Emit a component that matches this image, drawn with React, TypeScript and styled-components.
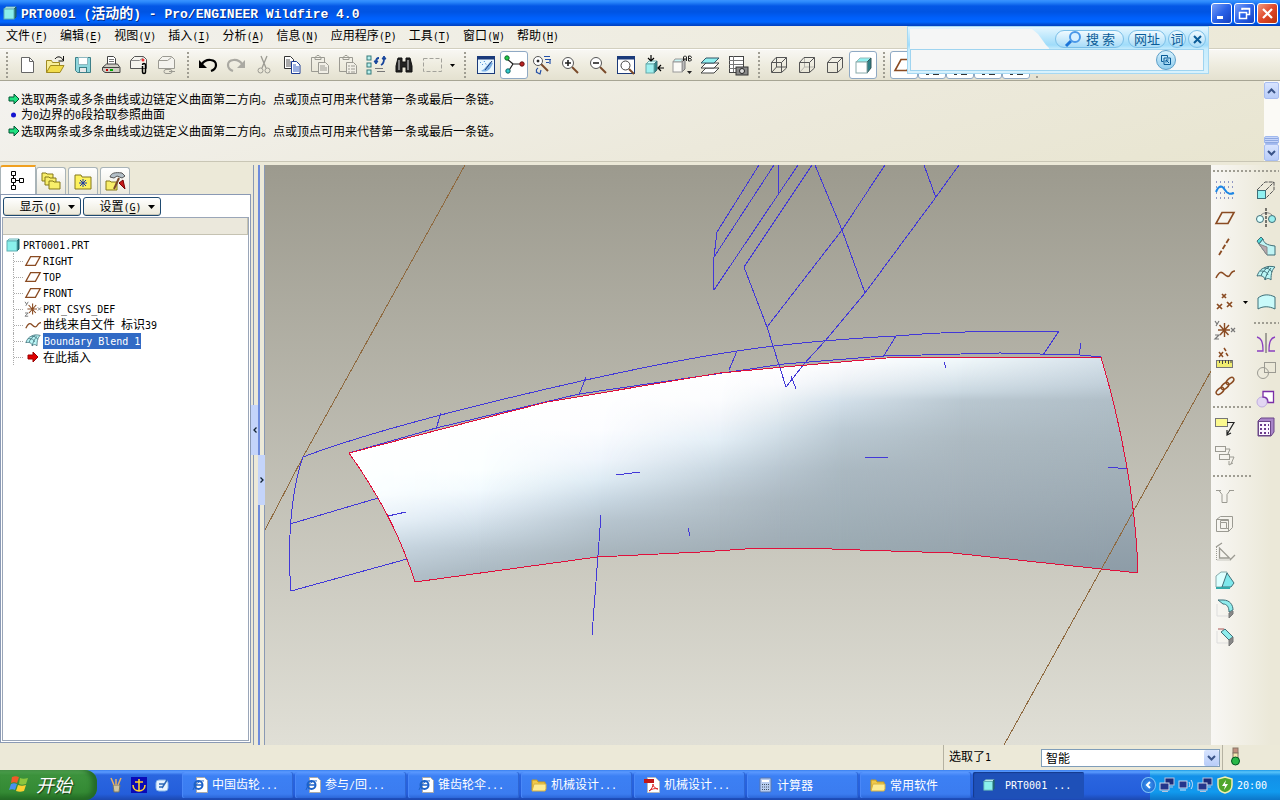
import React, { ReactNode } from "react";
import styled, { createGlobalStyle, css } from "styled-components";

const GlobalStyle = createGlobalStyle`
  * { box-sizing: border-box; }
  body {
    margin: 0;
    background: #ece9d8;
    font: 12px/16px "Noto Sans CJK SC", sans-serif;
    color: #000;
  }
  button, input, select { font: inherit; color: inherit; margin: 0; padding: 0; border: 0; background: none; }
  ul { list-style: none; margin: 0; padding: 0; }
`;

/* ---------- text ---------- */

const Latin = styled.span<{ $size: number }>`
  font-family: "DejaVu Sans Mono", monospace;
  font-size: ${(p) => p.$size}px;
  white-space: pre;
`;

function Text({ children, size = 10 }: { children: string; size?: number }) {
  return (
    <>
      {children.split(/([\x20-\x7e]+)/).map((part, i) =>
        i % 2 ? <Latin key={i} $size={size}>{part}</Latin> : part
      )}
    </>
  );
}

/* ---------- icons ---------- */

const Svg = styled.svg`
  display: block;
  flex: none;
  overflow: visible;
`;

function Icon({ children, size = 20, box = 20 }: { children: ReactNode; size?: number; box?: number }) {
  return (
    <Svg width={size} height={size} viewBox={`0 0 ${box} ${box}`} fill="none" stroke="#222" aria-hidden>
      {children}
    </Svg>
  );
}

const BROWN = "#8a4b22";
const GREY = "#9b9a92";
const TEAL = "#3f6f78";
const CYAN = "#9ff0f0";

const Cube = ({ size = 14 }: { size?: number }) => (
  <Icon size={size} box={14}>
    <path d="M1 3l2-2h10l-2 2z" fill="#d8ffff" stroke="#6fb4b8" />
    <path d="M11 3l2-2v10l-2 2z" fill="#1f7478" stroke="#1f5f64" />
    <rect x="1" y="3" width="10" height="10" fill="#8af0ec" stroke="#5fb0b4" />
  </Icon>
);

const Plane = ({ size = 20 }: { size?: number }) => (
  <Icon size={size}>
    <path d="M7 4.500H19L13 15.500H1z" stroke={BROWN} strokeWidth="1.600" />
  </Icon>
);

const Csys = ({ size = 20 }: { size?: number }) => (
  <Icon size={size}>
    <path d="M3 10h12M9.500 3v14M4.500 5l9 10M14 5L5 15" stroke={BROWN} strokeWidth="1.400" />
    <path d="M0 1l2 3M4 1L1 6M16 8l4 4M20 8l-4 4M0 15h4l-4 4h4" stroke="#777" strokeWidth="1.200" />
  </Icon>
);

const Curve = ({ size = 20 }: { size?: number }) => (
  <Icon size={size}>
    <path d="M1 14C4 8 6 7 9 10s5 3 6 1 3-4 5-4" stroke={BROWN} strokeWidth="1.600" />
  </Icon>
);

const Blend = ({ size = 20 }: { size?: number }) => (
  <Icon size={size}>
    <path d="M1 12C3 7 5 5 8 4c3-2 7-2 11-1-3 3-4 6-4 13-2-2-4-2-6 0 0-3-3-5-8-4z" fill="#baf6f6" stroke={TEAL} />
    <path d="M4 7c5 0 7 1 8 4M8 4c4 0 6 1 8 4M5 12c1-4 4-7 8-9M9 16c1-5 3-8 6-12" stroke={TEAL} />
  </Icon>
);

const NewDoc = () => (
  <Icon><path d="M4.500 2.500h8l4 4v11h-12z" fill="#fff" stroke="#666" /><path d="M12.500 2.500v4h4" stroke="#666" /></Icon>
);
const OpenFolder = () => (
  <Icon>
    <path d="M1.500 17.500v-12h5l1 2h7v3" fill="#f7ee9a" stroke="#a08a20" />
    <path d="M1.500 17.500l4-7h13.500l-4 7z" fill="#f2dc4a" stroke="#a08a20" />
    <path d="M10 4c2-3 6-3 8 1M18.500 1v5h-5" stroke="#111" />
  </Icon>
);
const Save = () => (
  <Icon>
    <path d="M2.500 2.500h15v15h-13l-2-2z" fill="#8fd6dc" stroke="#3d7f88" />
    <rect x="5.500" y="2.500" width="9" height="7" fill="#fff" stroke="#8fb8c0" />
    <rect x="6.500" y="12.500" width="7" height="5" fill="#e8e8e8" stroke="#3d7f88" />
  </Icon>
);
const Print = () => (
  <Icon>
    <path d="M6.500 9V1.500h6l2 2V9" fill="#fff" stroke="#444" />
    <path d="M8 4.500h5M8 6.500h5" stroke="#777" />
    <path d="M1.500 12.500l4-3.500h11l2.500 3.500v5h-15l-2.500-2z" fill="#cfccc2" stroke="#444" />
    <path d="M1.500 12.500h17" stroke="#444" /><path d="M5 15h2" stroke="#c00" strokeWidth="2" /><path d="M9 15h3" stroke="#0a0" strokeWidth="2" />
  </Icon>
);
const MailOut = ({ off = false }: { off?: boolean }) => (
  <Icon>
    <path d="M1.500 13.500v-8l4-4h9l3 3v9z" fill="#f4f3ee" stroke={off ? GREY : "#555"} />
    <path d="M1.500 5.500h9l4-3" stroke={off ? GREY : "#888"} />
    {off ? (
      <path d="M8 14.500h5a2 2 0 010 4H9a2 2 0 010-4M12 16.500h6" stroke={GREY} />
    ) : (
      <><circle cx="14" cy="5" r="1.500" fill="#e33" stroke="none" /><path d="M13.500 11v6a1.500 1.500 0 003 0v-7a1.500 1.500 0 00-3 0" stroke="#000" strokeWidth="1.500" /></>
    )}
  </Icon>
);
const Undo = () => (
  <Icon><path d="M4 9c4-6 14-5 14 1 0 3-2 5-5 6" stroke="#000" strokeWidth="2.200" /><path d="M1 5v8h8z" fill="#000" stroke="none" /></Icon>
);
const Redo = () => (
  <Icon><path d="M16 9C12 3 2 4 2 10c0 3 2 5 5 6" stroke="#aaa9a2" strokeWidth="2.200" /><path d="M19 5v8h-8z" fill="#aaa9a2" stroke="none" /></Icon>
);
const Cut = () => (
  <Icon><path d="M7 1l5 12M13 1L8 13" stroke={GREY} strokeWidth="1.300" /><circle cx="6.500" cy="15.500" r="2.500" stroke={GREY} /><circle cx="13.500" cy="15.500" r="2.500" stroke={GREY} /></Icon>
);
const Copy = () => (
  <Icon>
    <path d="M2.500 1.500h6l3 3v9h-9z" fill="#fff" stroke="#333" /><path d="M4 5h4M4 7h5M4 9h5M4 11h5" stroke="#555" />
    <path d="M9.500 6.500h5l3.500 3.500v8.500H9.500z" fill="#fff" stroke="#1d3c96" /><path d="M11 10h3M11 12h6M11 14h6M11 16h6" stroke="#3a62c4" />
  </Icon>
);
const Paste = ({ special = false }: { special?: boolean }) => (
  <Icon>
    <path d="M1.500 2.500h13v14h-13zM5 4.500h6v-2l-2-2H7l-2 2z" stroke={GREY} />
    <path d="M8.500 7.500h7l3 3v8h-10z" fill="#f1efe6" stroke={GREY} />
    <path d={special ? "M10 11h2M13 11h4M10 14h2M13 14h4M10 17h2M13 17h4" : "M10 11h5M10 13h7M10 15h7"} stroke={GREY} />
  </Icon>
);
const Regen = () => (
  <Icon>
    {[1, 8, 15].map((y) => <rect key={y} x="1" y={y} width="4" height="4" fill="#baf0ee" stroke="#357a7a" />)}
    <path d="M10 7c0-3 1-4 3-4M18 4c0 4-1 5-3 6" stroke="#17459c" strokeWidth="1.800" />
    <path d="M8 6h4l-2 3zM16 4h4l-2-3z" fill="#17459c" stroke="#17459c" />
    <path d="M9 13.500h8M11 16.500h8" stroke="#777" />
  </Icon>
);
const Binoculars = () => (
  <Icon>
    <path d="M4 3h4v4h4V3h4l2 8v6h-6v-5H8v5H2v-6z" fill="#222" stroke="#111" />
    <path d="M5 5v10M14 5v10" stroke="#ddd" />
  </Icon>
);
const SelectBox = () => (
  <Icon><rect x="1.500" y="3.500" width="18" height="13" stroke="#a3a29b" strokeDasharray="4 2" /></Icon>
);
const Repaint = () => (
  <Icon>
    <rect x="1.500" y="1.500" width="17" height="17" fill="#e9f7ff" stroke="#1b3a7a" />
    <path d="M1 3h18" stroke="#1b3a7a" strokeWidth="3" />
    <path d="M5 16c6 2 9-1 12-8l-3-1-6 7z" fill="#7fb2e6" stroke="none" /><path d="M4 7l3 3M8 6l5 8" stroke="#1d70c8" strokeDasharray="1 2" /><path d="M9 15l7-9" stroke="#1b3a7a" />
  </Icon>
);
const SpinCenter = () => (
  <Icon>
    <path d="M3 4l6 5-5 8M8 9h9" stroke="#222" strokeWidth="1.200" />
    <circle cx="3" cy="3" r="2.200" fill="#2c4" stroke="#163" /><circle cx="18" cy="9" r="2.200" fill="#b22" stroke="#611" /><circle cx="4" cy="16" r="2.200" fill="#3cc" stroke="#166" />
  </Icon>
);
const Magnifier = ({ mark }: { mark: string }) => (
  <Icon>
    <path d="M12 12l6 6" stroke="#7a4a2a" strokeWidth="2" />
    <circle cx="8" cy="8" r="5.500" fill="#fff" stroke="#555" />
    <path d={mark} stroke="#222" strokeWidth="1.600" />
  </Icon>
);
const Orient = () => (
  <Icon>
    <path d="M9 9l7 7" stroke="#7a4a2a" strokeWidth="2" /><circle cx="6" cy="6" r="4.500" fill="#fff" stroke="#555" /><circle cx="6" cy="6" r="1" fill="#000" />
    <path d="M12 1.500h6M13 4.500h6M14 7.500h3M18 5v4M6 13c-3 2-2 5 2 6M4 17l4 2 1-4" stroke="#2450a8" strokeWidth="1.200" />
  </Icon>
);
const Refit = () => (
  <Icon>
    <rect x="1.500" y="1.500" width="17" height="17" fill="#fff" stroke="#1b3a7a" /><path d="M1 3h18" stroke="#1b3a7a" strokeWidth="3" />
    <circle cx="9.500" cy="10.500" r="4.500" stroke="#444" /><path d="M13 14l5 5" stroke="#7a4a2a" strokeWidth="2" />
  </Icon>
);
const Reorient = () => (
  <Icon>
    <path d="M2 9l3-3h8l-3 3z" fill="#d8ffff" stroke="#6aa" /><path d="M10 9l3-3v9l-3 3z" fill="#2f8a8a" stroke={TEAL} /><rect x="2" y="9" width="8" height="9" fill={CYAN} stroke="#6aa" />
    <path d="M7 0v6M4 3l3 3 3-3M20 13h-6M17 10l-3 3 3 3" stroke="#000" strokeWidth="1.200" />
  </Icon>
);
const SavedView = () => (
  <Icon>
    <path d="M1 7l2-3h8l-2 3z" fill="#c8f5f5" stroke="#999" /><path d="M10 7l3-3v10l-3 3z" fill="#bbb" stroke="#777" /><rect x="1" y="7" width="9" height="10" fill="#fbfaf6" stroke="#999" />
    <path d="M11.500 6V2l1-1h1l1 1v4M12 4h2M16.500 1v5h2l1-1-1-1.500h-2 2l1-1-1-1.500z" stroke="#222" /><path d="M15 16h5l-2.500 3z" fill="#222" stroke="none" />
  </Icon>
);
const Layers = () => (
  <Icon>
    <path d="M1 18l5-5h13l-5 5z" fill="#fff" stroke="#444" /><path d="M1 13l5-5h13l-5 5z" fill="#fff" stroke="#444" /><path d="M1 8l5-5h13l-5 5z" fill="#8ff0f0" stroke="#356" />
  </Icon>
);
const ViewManager = () => (
  <Icon>
    <rect x="1.500" y="1.500" width="14" height="16" fill="#fff" stroke="#444" /><path d="M5.500 1v16M1 5.500h14M1 9.500h14M1 13.500h14" stroke="#777" />
    <rect x="8" y="12" width="12" height="8" fill="#888" stroke="#333" /><circle cx="14" cy="16" r="2.500" fill="#ddd" stroke="#222" />
  </Icon>
);
const WireCube = ({ back }: { back?: string }) => (
  <Icon>
    {back && <path d="M7.500 3v9H17M7.500 12L3 17" stroke={back} />}
    <path d="M2.500 7.500h10v10h-10zM2.500 7.500L7 2.500h10.500l-5 5M17.500 2.500V13l-5 4.500" stroke="#555" />
  </Icon>
);
const ShadedCube = () => (
  <Icon>
    <path d="M3 7l4-4h11l-4 4z" fill="#8ff0f0" stroke="#9bb" /><path d="M14 7l4-4v10l-4 5z" fill="#2f7f85" stroke="#355" /><rect x="3" y="7" width="11" height="11" fill="#fff" stroke="#8aa" />
  </Icon>
);

/* feature toolbar */
const Sketch = () => (
  <Icon>
    <path d="M1 2h18M1 7h18M1 13h18M1 18h18" stroke="#2c3f9c" strokeDasharray="1 3" />
    <path d="M1 12C4 5 7 5 10 10s6 4 9 3" stroke="#1b86e6" strokeWidth="2" />
  </Icon>
);
const Axis = () => <Icon><path d="M4 19L15 1" stroke={BROWN} strokeWidth="1.800" strokeDasharray="5 2" /></Icon>;
const Points = () => (
  <Icon><path d="M7 2l4 4M11 2L7 6M2 12l5 5M7 12l-5 5M12 10l5 5M17 10l-5 5" stroke={BROWN} strokeWidth="1.700" /></Icon>
);
const Analysis = () => (
  <Icon><path d="M4 4l4 5M8 4L4 9M9 0l2 3M11 5l2 3" stroke={BROWN} strokeWidth="1.500" /><rect x="1.500" y="12.500" width="16" height="7" fill="#f0ec70" stroke="#777" /><path d="M4.500 12v3M7.500 12v4M10.500 12v3M13.500 12v4M16 12v3" stroke="#444" /></Icon>
);
const Chain = () => (
  <Icon>
    <g stroke={BROWN} strokeWidth="1.500"><ellipse cx="5" cy="15" rx="4.500" ry="2.500" transform="rotate(-40 5 15)" /><ellipse cx="10" cy="10" rx="4.500" ry="2.500" transform="rotate(-40 10 10)" /><ellipse cx="15" cy="5" rx="4.500" ry="2.500" transform="rotate(-40 15 5)" /></g>
  </Icon>
);
const Note = () => (
  <Icon><rect x="0.500" y="1.500" width="12" height="8" fill="#fbf98e" stroke="#777" /><path d="M12 5.500h7l-7 12M12 13v5l4-2" stroke="#222" strokeWidth="1.200" /></Icon>
);
const NoteOff = () => (
  <Icon><g stroke={GREY}><rect x="0.500" y="1.500" width="10" height="5" /><rect x="4.500" y="9.500" width="10" height="5" /><path d="M10 4h5l-2 5M15 12h4l-3 7M14 16v4l4-2" /></g></Icon>
);
const Hole = () => <Icon><path d="M1 4.500h5M14 4.500h5M4 4.500l3 4v8h5v-8l3-4" stroke={GREY} /></Icon>;
const Shell = () => <Icon><path d="M1.500 5.500h12v12h-12zM5.500 8.500h6v6h-6zM1.500 5.500l4-3h12v11l-4 4M5.500 8.500V6.500h8v8h-2" stroke={GREY} /></Icon>;
const Rib = () => <Icon><path d="M4.500 6v10h10zM1 5l6-4M15 18l5-5" stroke={GREY} strokeWidth="1.300" /><path d="M1.500 5v13h14" stroke={GREY} strokeDasharray="1 1" /></Icon>;
const Draft = () => (
  <Icon><path d="M1 17V6l5-4h6v9L7 17z" fill="#dff" stroke="#8aa" /><path d="M7 17l5-14 7 10-3 4z" fill="#7ee8ec" stroke={TEAL} /><path d="M1 18h14" stroke="#3aa" strokeWidth="2" /></Icon>
);
const Round = () => (
  <Icon><path d="M2 6v12h11" stroke="#ddd" /><path d="M3 2h5c7 0 10 5 10 10l-4 2c0-5-2-8-6-8z" fill="#8eecec" stroke={TEAL} /><path d="M14 15l4-2v3l-4 4z" fill="#888" stroke="#777" /></Icon>
);
const Chamfer = () => (
  <Icon><path d="M2 5v12h11" stroke="#ddd" /><path d="M10 3l8 8-4 3-8-8z" fill="#8eecec" stroke={TEAL} /><path d="M3 3h6" stroke="#a55" /><path d="M14 14l4-3v5l-4 4z" fill="#888" stroke="#777" /></Icon>
);
const Extrude = () => (
  <Icon><rect x="1.500" y="10.500" width="8" height="8" fill="#8ff0f0" stroke={TEAL} /><path d="M1 10l8-8h9v8l-8 8M10 10l8-8" stroke="#555" strokeDasharray="4 1" /></Icon>
);
const Revolve = () => (
  <Icon><circle cx="4" cy="11" r="3.500" fill="#dff" stroke={TEAL} /><circle cx="16" cy="11" r="3.500" fill="#9ee" stroke={TEAL} /><path d="M5 7c3-3 8-3 11 0" stroke="#888" /><path d="M10 0v20" stroke="#000" strokeDasharray="3 1" /></Icon>
);
const Sweep = () => (
  <Icon><path d="M1 5l4-4 2 2-4 5z" fill="#5dd" stroke={TEAL} /><path d="M7 3c1 4 3 6 12 7v9H11L3 8z" fill="#bff4f4" stroke={TEAL} /><path d="M3 8l8 11V11z" fill="#b7a8ae" stroke="#888" /></Icon>
);
const Style = () => <Icon><path d="M2 17V6c5-4 11-4 17-1v12c-6-3-12-3-17 0z" fill="#c9fafa" stroke={TEAL} /></Icon>;
const Mirror = () => (
  <Icon><path d="M1 4c4 1 6 4 6 14H1M19 4c-4 1-6 4-6 14h6" stroke="#8a3fc0" strokeWidth="1.300" /><path d="M10 0v20" stroke="#555" /></Icon>
);
const Merge = () => <Icon><rect x="8.500" y="1.500" width="11" height="10" stroke={GREY} /><circle cx="7" cy="12" r="5.500" stroke={GREY} /></Icon>;
const Trim = () => <Icon><circle cx="6" cy="13" r="5" fill="#e2d6f2" stroke="#c0aee0" /><path d="M7 8V2.500h10.500v11H12C12 10 10 8 7 8z" fill="#fff" stroke="#7a2fa8" strokeWidth="1.300" /></Icon>;
const Pattern = () => (
  <Icon><path d="M2 4l3-3h13v14l-3 4H2z" fill="#a884c8" stroke="#6b4688" /><rect x="2.500" y="4.500" width="12" height="14" fill="#fbf5ff" stroke="#6b4688" /><path d="M4 8h9M4 12h9M4 16h9" stroke="#6b3a8c" strokeWidth="2" strokeDasharray="2 2" /></Icon>
);

/* taskbar */
const IePage = () => (
  <Icon size={16} box={16}>
    <path d="M4.500.500h8l3 3v12h-11z" fill="#fff" stroke="#aaa" /><circle cx="6.500" cy="8" r="4" stroke="#1c62c8" strokeWidth="2" /><path d="M3 8h8" stroke="#1c62c8" strokeWidth="1.500" /><path d="M1 13c2-6 7-10 11-9" stroke="#1c62c8" />
  </Icon>
);
const FolderIcon = () => (
  <Icon size={16} box={16}><path d="M1 13V3h5l1 2h7v8z" fill="#f0c94a" stroke="#c49a20" /><path d="M1 14l2-7h12v5l-1 2z" fill="#fdec94" stroke="#d6b040" /></Icon>
);
const PdfIcon = () => (
  <Icon size={16} box={16}><path d="M3.500.500h8l4 4v11h-12z" fill="#fff" stroke="#bbb" /><rect x="0" y="2" width="10" height="4" fill="#c01818" stroke="none" /><path d="M5 14c3-2 4-5 4-7 0 3 2 4 5 5-4-1-6 0-9 2z" stroke="#d22" /></Icon>
);
const CalcIcon = () => (
  <Icon size={16} box={16}><rect x="3" y="1" width="11" height="14" rx="1" fill="#b8cdf0" stroke="#5a78b0" /><rect x="5" y="3" width="7" height="2" fill="#fff" stroke="none" /><path d="M5 7.500h7M5 10h7M5 12.500h7" stroke="#456" strokeDasharray="1 1" /></Icon>
);
const Monitors = () => (
  <Icon size={16} box={16}><rect x="6" y="1" width="9" height="7" fill="#1c2a78" stroke="#b8c4dc" /><rect x="1" y="6" width="9" height="7" fill="#24368c" stroke="#d0d8e8" /><path d="M3 14.500h6M11 10h3" stroke="#b8c4dc" /></Icon>
);
const Radio = () => (
  <Icon size={16} box={16}><rect x="1" y="4" width="8" height="7" fill="#24368c" stroke="#d0d8e8" /><path d="M2 13h6M11 5c1 2 1 3 0 5M13 3c2 3 2 6 0 9" stroke="#d8e4f8" /></Icon>
);
const Shield = () => (
  <Icon size={18} box={18}><path d="M9 1l7 2v6c0 4-3 7-7 8-4-1-7-4-7-8V3z" fill="#4fa62c" stroke="#f2f0b0" strokeWidth="1.500" /><path d="M10 4L6 10h3l-1 4 4-6H9z" fill="#fff" stroke="none" /></Icon>
);

/* ---------- window frame ---------- */

const Page = styled.div`
  position: relative;
  display: flex;
  flex-direction: column;
  min-height: 100vh;
  overflow: hidden;
`;

const TitleBar = styled.header`
  display: flex;
  align-items: center;
  gap: 4px;
  height: 26px;
  padding: 0 2px 0 3px;
  background: linear-gradient(#3a93ff 0, #2a88fb 2px, #0458e6 6px, #0054e3 12px, #0060fc 18px, #0066ff 22px, #0050d8 24px, #003fc0 26px);
`;

const Title = styled.h1`
  flex: 1;
  margin: 0;
  color: #fff;
  font-size: 14px;
  line-height: 20px;
  font-weight: 700;
  text-shadow: 1px 1px 0 #0a2f86;
  span { font-family: "Liberation Mono", monospace; }
`;

const CaptionButton = styled.button<{ $close?: boolean }>`
  width: 21px;
  height: 21px;
  display: grid;
  place-items: center;
  border: 1px solid #fff;
  border-radius: 3px;
  background: ${(p) => (p.$close ? "linear-gradient(135deg, #f09a80, #e0482a 50%, #b8320c)" : "linear-gradient(135deg, #7aa0f8, #2a62e8 50%, #1540c0)")};
`;
const CaptionButtons = styled.div`
  display: flex;
  gap: 2px;
`;

const MenuBar = styled.nav`
  display: flex;
  gap: 12px;
  height: 23px;
  padding: 0 6px 2px;
  align-items: center;
  background: linear-gradient(90deg, #f2f1ec, #ece9d8);
  border-bottom: 1px solid #d2cfbf;
`;
const MenuButton = styled.button`
  white-space: nowrap;
  u { text-underline-offset: 2px; }
`;

const ToolBar = styled.div`
  display: flex;
  align-items: center;
  height: 32px;
  background: linear-gradient(#f8f7f3, #eeecdf 50%, #e4e1d0);
  border-top: 1px solid #fff;
  border-bottom: 1px solid #a7a594;
`;
const Grip = styled.span<{ $w?: number }>`
  flex: none;
  width: ${(p) => p.$w ?? 13}px;
  height: 26px;
  display: grid;
  place-items: center;
  &::before { content: ""; width: 2px; height: 26px; background: repeating-linear-gradient(#9f9d92 0 2px, transparent 2px 4px); }
`;
const ToolButton = styled.button<{ $on?: boolean }>`
  flex: none;
  width: 28px;
  height: 28px;
  display: grid;
  place-items: center;
  border-radius: 3px;
  ${(p) => p.$on && css`background: #fff; border: 1px solid #8fa9c4;`}
`;
const DropArrow = styled.button`
  width: 12px;
  height: 28px;
  display: grid;
  place-items: center;
`;
const Triangle = () => (
  <Svg width="7" height="4" viewBox="0 0 7 4" aria-hidden><path d="M0 0h7L3.500 4z" fill="#000" /></Svg>
);
const SmallTriangle = () => (
  <Svg width="5" height="3" viewBox="0 0 5 3" aria-hidden><path d="M0 0h5L2.500 3z" fill="#000" /></Svg>
);

/* ---------- floating search box ---------- */

const SearchWidget = styled.form`
  position: absolute;
  top: 26px;
  right: 71px;
  width: 302px;
  height: 48px;
  padding: 2px;
  border: 1px solid #a6d8f2;
  background: linear-gradient(#e4f6ff, #9fdcfa 18px, #c6ecfd 22px, #d8f2fd);
`;
const WidgetTop = styled.div`
  display: flex;
  align-items: center;
  gap: 2px;
  height: 20px;
  color: #0a5c98;
`;
const WidgetInput = styled.input`
  flex: 1;
  min-width: 0;
  align-self: stretch;
  margin-right: 4px;
  padding: 0 16px 0 6px;
  background: #f5f6f6;
  clip-path: polygon(0 0, 122px 0, 128px 5px, 136px 16px, 140px 20px, 0 20px);
`;
const Pill = styled.button<{ $w: number }>`
  width: ${(p) => p.$w}px;
  height: 18px;
  display: flex;
  align-items: center;
  justify-content: center;
  gap: 4px;
  border: 1px solid #7cc0e8;
  border-radius: 9px;
  background: linear-gradient(#f0faff, #a8dcf8);
  font-size: 13px;
  line-height: 16px;
  white-space: nowrap;
`;
const WidgetBottom = styled.div`
  display: flex;
  align-items: center;
  justify-content: flex-end;
  height: 22px;
  padding-right: 27px;
  margin-right: 2px;
  background: #f5f6f6;
  border: 1px solid #9fd4f0;
`;
const RoundButton = styled.button`
  width: 20px;
  height: 20px;
  display: grid;
  place-items: center;
  border: 1px solid #5d9fc8;
  border-radius: 50%;
  background: linear-gradient(#d8f1fd, #8fcdee);
`;

/* ---------- message area ---------- */

const Messages = styled.section`
  display: flex;
  height: 81px;
  border-bottom: 1px solid #c9c6b5;
  background: linear-gradient(165deg, #f4f3f0, #ece9db 60%, #e8e5d0);
`;
const MessageList = styled.ul`
  flex: 1;
  padding: 10px 8px;
  li { display: flex; align-items: center; gap: 1px; height: 16px; }
`;
const ScrollTrack = styled.div`
  width: 16px;
  padding-top: 1px;
  display: flex;
  flex-direction: column;
  background: #fbfaf6;
`;
const ScrollSpace = styled.div`
  flex: 1;
  display: flex;
  align-items: flex-end;
`;
const Thumb = styled.span`
  width: 15px;
  height: 8px;
  border: 1px solid #9fb8ee;
  border-radius: 2px;
  background: repeating-linear-gradient(#c6d5fa 0 1px, #8ea8e0 1px 2px);
`;
const ScrollButton = styled.button`
  width: 15px;
  height: 17px;
  display: grid;
  place-items: center;
  border: 1px solid #a8bdf0;
  border-radius: 2px;
  background: linear-gradient(#d8e4fe, #b8ccf8);
`;
const Chevron = ({ up = false }: { up?: boolean }) => (
  <Svg width="9" height="6" viewBox="0 0 9 6" fill="none" aria-hidden>
    <path d={up ? "M1 5l3.500-3.500L8 5" : "M1 1l3.500 3.500L8 1"} stroke="#3a5488" strokeWidth="2" />
  </Svg>
);

/* ---------- model tree ---------- */

const Main = styled.main`
  flex: 1;
  display: grid;
  grid-template-columns: 251px 14px minmax(0, 1fr) 69px;
  padding-top: 3px;
`;
const Side = styled.aside`
  display: flex;
  flex-direction: column;
  padding-bottom: 2px;
`;
const Tabs = styled.div`
  display: flex;
  align-items: flex-end;
  gap: 2px;
  height: 29px;
`;
const Tab = styled.button<{ $active?: boolean }>`
  width: 30px;
  height: 27px;
  display: grid;
  place-items: center;
  border: 1px solid #a9b4b8;
  border-bottom: 0;
  border-radius: 3px 3px 0 0;
  background: linear-gradient(#fff, #ebe9dd);
  ${(p) => p.$active && css`width: 36px; height: 29px; margin-right: -2px; background: #fff; border-top: 2px solid #f0a020; border-radius: 3px 0 0 0;`}
`;
const SideBody = styled.div`
  flex: 1;
  display: flex;
  flex-direction: column;
  padding: 2px 1px 1px;
  background: #fff;
  border: 1px solid #8a99b4;
`;
const SideButtons = styled.div`
  display: flex;
  gap: 2px;
  padding: 0 1px 1px;
`;
const SideButton = styled.button`
  width: 78px;
  height: 19px;
  padding-left: 10px;
  display: flex;
  align-items: center;
  justify-content: center;
  gap: 6px;
  border: 1px solid #1f4a70;
  border-radius: 3px;
  background: linear-gradient(#fff, #ece9da);
  box-shadow: inset 0 -1px 0 #c8c6b8;
  u { text-underline-offset: 2px; }
`;
const TreeBox = styled.div`
  flex: 1;
  border: 1px solid #9aa6b8;
`;
const TreeHeader = styled.div`
  height: 17px;
  background: #ebe8dc;
  border-bottom: 1px solid #c5c2b2;
  border-right: 1px solid #c5c2b2;
`;
const Tree = styled.ul`
  padding: 2px 3px;
`;
const Node = styled.li<{ $root?: boolean }>`
  display: flex;
  align-items: center;
  gap: ${(p) => (p.$root ? 3 : 2)}px;
  height: 16px;
  ${(p) => !p.$root && css`
    margin-left: 7px;
    border-left: 1px dotted #aaa;
    &::before { content: ""; width: 9px; border-top: 1px dotted #aaa; }
  `}
`;
const NodeLabel = styled.span<{ $selected?: boolean }>`
  ${(p) => p.$selected && css`background: #316ac5; color: #fff; line-height: 14px; padding: 0 1px;`}
`;

const Splitter = styled.div`
  display: grid;
  grid-template-columns: 7px 7px;
  background: linear-gradient(90deg, #ece9d8 0 2px, #8a99b4 2px 3px, #ece9d8 3px 7px, #6f8cdc 7px 9px, #ece9d8 9px 13px, #8a99b4 13px);
`;
const Handle = styled.button<{ $low?: boolean }>`
  height: 50px;
  margin-top: ${(p) => (p.$low ? 290 : 240)}px;
  display: grid;
  place-items: center;
  background: #c4d4fa;
`;

/* ---------- feature toolbars ---------- */

const Features = styled.div`
  display: grid;
  grid-template-columns: 41px 28px;
  background: linear-gradient(90deg, #f8f7f4, #ebe8d8 60px);
`;
const FeatureColumn = styled.div`
  display: flex;
  flex-direction: column;
`;
const FeatureGrip = styled.span<{ $first?: boolean }>`
  height: ${(p) => (p.$first ? 11 : 13)}px;
  display: flex;
  align-items: center;
  &::before { content: ""; flex: 1; height: 2px; margin: 0 1px 0 2px; background: repeating-linear-gradient(90deg, #9f9d92 0 2px, transparent 2px 4px); }
`;
const FeatureRow = styled.div`
  display: flex;
  align-items: center;
`;

/* ---------- model view ---------- */

const View = styled.svg`
  display: block;
  width: 100%;
  height: 100%;
  min-height: 400px;
`;

type Column = { x: number; stops: [number, string][] };

/* shading of the blend surface, sampled along vertical sections */
const columns: Column[] = [
  { x: 350, stops: [[440, "#ffffff"], [495, "#fcffff"], [520, "#eef6fd"], [545, "#d0dee9"], [580, "#b6c4ce"]] },
  { x: 480, stops: [[415, "#ffffff"], [470, "#fbffff"], [490, "#f2fafe"], [510, "#e0ebf4"], [530, "#ccdae4"], [550, "#b9c7d1"], [575, "#a9b7c0"]] },
  { x: 600, stops: [[390, "#ffffff"], [430, "#fcfdff"], [460, "#eff5fc"], [480, "#deebf4"], [500, "#c9d8e3"], [520, "#b8c6d0"], [555, "#a7b4bc"]] },
  { x: 720, stops: [[373, "#ffffff"], [400, "#fbfcfe"], [420, "#f1f5fa"], [440, "#e3eef6"], [470, "#c8d6e0"], [500, "#b5c2cb"], [550, "#a2afb7"]] },
  { x: 780, stops: [[366, "#ffffff"], [385, "#f9fafd"], [400, "#ecf2f6"], [430, "#d3e0e9"], [470, "#b8c6d0"], [500, "#abb8c1"], [550, "#9eabb4"]] },
  { x: 840, stops: [[362, "#fdfdff"], [380, "#eff3f7"], [394, "#dfe8ef"], [402, "#d3e0ea"], [430, "#bccbd5"], [470, "#abb9c2"], [550, "#9baab2"]] },
  { x: 960, stops: [[357, "#f3fafc"], [375, "#e0eaf0"], [392, "#cad8e1"], [400, "#bac8d1"], [440, "#adbac2"], [500, "#a2afb8"], [555, "#96a4ad"]] },
  { x: 1110, stops: [[357, "#d5e1ea"], [385, "#c0ced8"], [400, "#b0bec7"], [440, "#a8b6be"], [500, "#9dabb4"], [573, "#8d9ca7"]] },
];

const TOP = 350;
const SPAN = 240;
const OUTLINE =
  "M349 453L547 402L720 373L784 367L898 357L1101 357C1120 420 1136 500 1138 573L953 553L860 550L803 548L760 548L700 552L597 557L415 582C404 548 388 508 349 453Z";

const wires = [
  "M291 591C287 545 291 490 303 457C400 420 630 367 737 351C790 343 840 339 896 336C930 333 960 331 1059 331L1043 355",
  "M441 413L436 429M586 377L579 395M737 351L729 370M896 336L883 357",
  "M290 524L378 498M291 591L407 559",
  "M349 453L436 428L579 394L784 364L883 356L1000 353L1080 355L1101 357",
  "M388 516L406 512M616 475L640 472M601 515L592 635M688 528L690 536M865 457H888M1108 467L1127 469",
  "M944 362L946 368M1081 343L1079 355M791 376L796 389",
  "M759 165L717 232L714 257L713 270L714 290L798 165M774 165L714 257M778 165V195",
  "M812 165L744 267L767 327L786 387L804 364L825 341L865 293L936 197L959 165",
  "M815 165L842 230L865 293M885 165L842 230L767 327M924 165L936 198",
];

function ModelView() {
  return (
    <View viewBox="265 165 946 580" preserveAspectRatio="xMidYMid slice" role="img" aria-label="Boundary Blend 1">
      <defs>
        <linearGradient id="sky" x1="0" y1="0" x2="0" y2="1">
          <stop offset="0" stopColor="#9c9a8e" />
          <stop offset="1" stopColor="#e0dfd6" />
        </linearGradient>
        <clipPath id="surface"><path d={OUTLINE} /></clipPath>
        {columns.map((c, i) => (
          <React.Fragment key={c.x}>
            <linearGradient id={`shade${i}`} gradientUnits="userSpaceOnUse" x1="0" x2="0" y1={TOP} y2={TOP + SPAN}>
              {c.stops.map(([y, color]) => <stop key={y} offset={(y - TOP) / SPAN} stopColor={color} />)}
            </linearGradient>
            {i > 0 && (
              <>
                <linearGradient id={`fade${i}`} gradientUnits="userSpaceOnUse" y1="0" y2="0" x1={columns[i - 1].x} x2={c.x}>
                  <stop offset="0" stopColor="#000" />
                  <stop offset="1" stopColor="#fff" />
                </linearGradient>
                <mask id={`mask${i}`} maskUnits="userSpaceOnUse" x="340" y={TOP} width="800" height={SPAN}>
                  <rect x="340" y={TOP} width="800" height={SPAN} fill={`url(#fade${i})`} />
                </mask>
              </>
            )}
          </React.Fragment>
        ))}
      </defs>
      <rect x="-735" y="165" width="2946" height="580" fill="url(#sky)" />
      <g clipPath="url(#surface)">
        {columns.map((c, i) => (
          <rect key={c.x} x="340" y={TOP} width="800" height={SPAN} fill={`url(#shade${i})`} mask={i ? `url(#mask${i})` : undefined} />
        ))}
      </g>
      <g fill="none" shapeRendering="crispEdges">
        <path d="M465 165L303 457L265 530M1211 371L1004 745" stroke="#8f6a40" />
        {wires.map((d) => <path key={d} d={d} stroke="#4238d8" />)}
        <path d={OUTLINE} stroke="#e0103c" />
      </g>
    </View>
  );
}

/* ---------- status bar and taskbar ---------- */

const StatusBar = styled.footer`
  display: flex;
  justify-content: flex-end;
  height: 25px;
  background: #ece9d8;
`;
const StatusCell = styled.div<{ $w: number }>`
  width: ${(p) => p.$w}px;
  padding: 3px 5px;
  border-left: 1px solid #b5b2a2;
`;
const FilterCell = styled.div`
  position: relative;
  width: 181px;
  padding: 4px 2px 3px 0;
`;
const Filter = styled.select`
  appearance: none;
  width: 179px;
  height: 18px;
  padding-left: 4px;
  border: 1px solid #7f9db9;
  background: #fff;
`;
const FilterArrow = styled.span`
  position: absolute;
  right: 3px;
  top: 5px;
  width: 15px;
  height: 16px;
  display: grid;
  place-items: center;
  border-radius: 2px;
  background: linear-gradient(#d8e4fe, #b8ccf8);
  pointer-events: none;
`;

const TaskBar = styled.footer`
  display: flex;
  height: 30px;
  color: #fff;
  background: linear-gradient(#3a80f0 0, #5a9aff 2px, #2a66e0 5px, #245edb 24px, #1c48b0 30px);
`;
const Start = styled.button`
  width: 97px;
  display: flex;
  align-items: center;
  gap: 8px;
  padding: 0 0 2px 10px;
  border-radius: 0 12px 12px 0;
  background: linear-gradient(#5cb05c 0, #3c923c 5px, #348a34 22px, #236b23 30px);
  box-shadow: inset -5px 0 5px #246a28;
  font-size: 18px;
  line-height: 24px;
  font-style: italic;
  text-shadow: 1px 1px 1px #1a3c1a;
`;
const Quick = styled.div`
  display: flex;
  align-items: center;
  gap: 7px;
  width: 85px;
  padding-left: 11px;
`;
const QuickButton = styled.button`
  width: 16px;
  height: 16px;
`;
const Tasks = styled.div`
  flex: 1;
  min-width: 0;
  display: flex;
  gap: 2px;
  align-items: center;
`;
const Task = styled.button<{ $active?: boolean }>`
  flex: 0 1 111px;
  min-width: 0;
  height: 26px;
  display: flex;
  align-items: center;
  gap: 4px;
  padding: 0 10px;
  border-radius: 2px;
  overflow: hidden;
  white-space: nowrap;
  background: ${(p) => (p.$active ? "#1e50b8" : "linear-gradient(#5a98ff, #3c80f4 4px, #3b7cf0 22px, #2c66d8)")};
  box-shadow: ${(p) => (p.$active ? "inset 1px 1px 1px #143a8c" : "inset 1px 0 0 #4a88f8, inset -1px 0 0 #2e66d4")};
`;
const Tray = styled.div`
  flex: none;
  display: flex;
  align-items: center;
  gap: 3px;
  width: 130px;
  padding-right: 13px;
  background: linear-gradient(#1b98e8 0, #58c4fa 2px, #1290e8 6px, #119aee 22px, #0c76c8 30px);
`;
const TrayToggle = styled.button`
  width: 16px;
  height: 16px;
  margin-left: -9px;
  display: grid;
  place-items: center;
  border-radius: 50%;
  border: 1px solid #7fc4f8;
  background: radial-gradient(#3f9cf4, #1458c8);
`;
const Clock = styled.time`
  margin-left: auto;
`;

const MENUS = [
  ["文件", "F"], ["编辑", "E"], ["视图", "V"], ["插入", "I"], ["分析", "A"],
  ["信息", "N"], ["应用程序", "P"], ["工具", "T"], ["窗口", "W"], ["帮助", "H"],
];

const Mnemonic = ({ name, letter }: { name: string; letter: string }) => (
  <span>{name}<Latin $size={10}>(<u>{letter}</u>)</Latin></span>
);

const MORE = [0, 1, 2, 3];

const Arrow = () => (
  <Icon size={12} box={12}>
    <path d="M1 4h5V1l5 5-5 5V8H1z" fill="#20e080" stroke="#053" />
  </Icon>
);
const Bullet = () => <Icon size={12} box={12}><circle cx="5.500" cy="6" r="2.500" fill="#1414d0" stroke="none" /></Icon>;

const PROMPT = "选取两条或多条曲线或边链定义曲面第二方向。点或顶点可用来代替第一条或最后一条链。";

const groupFile = [NewDoc, OpenFolder, Save, Print, MailOut];
const groupEdit = [Undo, Redo, Cut, Copy, Paste];

const TASKS: [ReactNode, string][] = [
  [<IePage />, "中国齿轮..."], [<IePage />, "参与/回..."], [<IePage />, "锥齿轮伞..."], [<FolderIcon />, "机械设计..."],
  [<PdfIcon />, "机械设计..."], [<CalcIcon />, "计算器"], [<FolderIcon />, "常用软件"],
];

export default function App() {
  return (
    <Page>
      <GlobalStyle />
      <TitleBar>
        <Cube />
        <Title><Text size={13}>PRT0001 (活动的) - Pro/ENGINEER Wildfire 4.0</Text></Title>
        <CaptionButtons>
          <CaptionButton aria-label="最小化"><Icon size={15} box={15}><path d="M3 11.500h6" stroke="#fff" strokeWidth="3" /></Icon></CaptionButton>
          <CaptionButton aria-label="还原"><Icon size={15} box={15}><path d="M5 4V2.500h7.500v6H10M2.500 6.500h7v6h-7zM2 6.500h8M5 3h8" stroke="#fff" strokeWidth="1.500" /></Icon></CaptionButton>
          <CaptionButton $close aria-label="关闭"><Icon size={15} box={15}><path d="M3 3l9 9M12 3l-9 9" stroke="#fff" strokeWidth="2.200" /></Icon></CaptionButton>
        </CaptionButtons>
      </TitleBar>

      <MenuBar>
        {MENUS.map(([name, letter]) => (
          <MenuButton key={letter}><Mnemonic name={name} letter={letter} /></MenuButton>
        ))}
      </MenuBar>

      <ToolBar>
        <Grip />
        {groupFile.map((G, i) => <ToolButton key={i}><G /></ToolButton>)}
        <ToolButton><MailOut off /></ToolButton>
        <Grip />
        {groupEdit.map((G, i) => <ToolButton key={i}><G /></ToolButton>)}
        <ToolButton><Paste special /></ToolButton>
        <ToolButton><Regen /></ToolButton>
        <ToolButton><Binoculars /></ToolButton>
        <ToolButton><SelectBox /></ToolButton>
        <DropArrow aria-label="选取"><SmallTriangle /></DropArrow>
        <Grip $w={14} />
        <ToolButton><Repaint /></ToolButton>
        <ToolButton $on><SpinCenter /></ToolButton>
        <ToolButton><Orient /></ToolButton>
        <ToolButton><Magnifier mark="M5 8h6M8 5v6" /></ToolButton>
        <ToolButton><Magnifier mark="M5 8h6" /></ToolButton>
        <ToolButton><Refit /></ToolButton>
        <ToolButton><Reorient /></ToolButton>
        <ToolButton><SavedView /></ToolButton>
        <ToolButton><Layers /></ToolButton>
        <ToolButton><ViewManager /></ToolButton>
        <Grip />
        <ToolButton><WireCube back="#555" /></ToolButton>
        <ToolButton><WireCube back="#b5b4ac" /></ToolButton>
        <ToolButton><WireCube /></ToolButton>
        <ToolButton $on><ShadedCube /></ToolButton>
        <Grip />
        <ToolButton $on><Plane /></ToolButton>
        {MORE.map((i) => (
          <ToolButton key={i} $on><Icon><path d="M4 19.500h3M11 19.500h6" stroke="#333" /></Icon></ToolButton>
        ))}
        <Grip />
      </ToolBar>

      <SearchWidget onSubmit={(e) => e.preventDefault()}>
        <WidgetTop>
          <WidgetInput aria-label="搜索" />
          <Pill $w={69}>
            <Icon size={18} box={18}><path d="M7 11l-5 5" stroke="#1c74d8" strokeWidth="3" /><circle cx="11" cy="7" r="5" fill="#d8f0ff" stroke="#4a98e8" strokeWidth="2" /></Icon>
            搜 索
          </Pill>
          <span />
          <Pill $w={38}>网址</Pill>
          <Pill $w={18}>词</Pill>
          <Pill $w={18} aria-label="关闭"><Icon size={9} box={9}><path d="M1 1l7 7M8 1L1 8" stroke="#0a5c98" strokeWidth="2" /></Icon></Pill>
        </WidgetTop>
        <WidgetBottom>
          <RoundButton aria-label="展开"><Icon size={10} box={10}><path d="M2.500.500h-2v6h2M.500.500h6v2M3 3h6.500v6.500H3zM5 5l3 3M5 7.500V5h2.500" stroke="#0a5c98" /></Icon></RoundButton>
        </WidgetBottom>
      </SearchWidget>

      <Messages>
        <MessageList>
          <li><Arrow />{PROMPT}</li>
          <li><Bullet /><span><Text>为0边界的0段拾取参照曲面</Text></span></li>
          <li><Arrow />{PROMPT}</li>
        </MessageList>
        <ScrollTrack>
          <ScrollButton aria-label="向上"><Chevron up /></ScrollButton>
          <ScrollSpace><Thumb /></ScrollSpace>
          <ScrollButton aria-label="向下"><Chevron /></ScrollButton>
        </ScrollTrack>
      </Messages>

      <Main>
        <Side>
          <Tabs>
            <Tab $active aria-label="模型树">
              <Icon><path d="M3.500.500h4v4h-4zM3.500 7.500h4v4h-4zM3.500 14.500h4v4h-4zM11.500 7.500h4v4h-4zM5.500 5v2M5.500 12v2M8 9.500h3" stroke="#000" /></Icon>
            </Tab>
            <Tab aria-label="文件夹浏览器">
              <Icon><g fill="#f8ee6a" stroke="#857818"><path d="M1 2h4l1 1h6v7H1z" /><path d="M4 6h4l1 1h6v7H4z" /><path d="M8 10h4l1 1h6v7H8z" /></g></Icon>
            </Tab>
            <Tab aria-label="收藏夹">
              <Icon><path d="M2 4h6l1 2h9v12H2z" fill="#fdf25e" stroke="#857818" /><path d="M10 8v8M6 12h8M7 9l6 6M13 9l-6 6" stroke="#1c3aa8" /></Icon>
            </Tab>
            <Tab aria-label="连接">
              <Icon><path d="M1 10h4l1 1h6v8H1z" fill="#f8ee6a" stroke="#857818" /><path d="M9 18l5-11" stroke="#7a4a2a" strokeWidth="2" /><path d="M5 6c1-4 5-5 12-4l3 3-3 2-5-2-3 2z" fill="#b4c0c8" stroke="#555" /><path d="M14 12l4-3 2 9z" fill="#c81818" stroke="#700" /></Icon>
            </Tab>
          </Tabs>
          <SideBody>
            <SideButtons>
              <SideButton><Mnemonic name="显示" letter="O" /><Triangle /></SideButton>
              <SideButton><Mnemonic name="设置" letter="G" /><Triangle /></SideButton>
            </SideButtons>
            <TreeBox>
              <TreeHeader />
              <Tree>
                <Node $root><Cube /><NodeLabel><Text>PRT0001.PRT</Text></NodeLabel></Node>
                <Node><Plane size={16} /><NodeLabel><Text>RIGHT</Text></NodeLabel></Node>
                <Node><Plane size={16} /><NodeLabel><Text>TOP</Text></NodeLabel></Node>
                <Node><Plane size={16} /><NodeLabel><Text>FRONT</Text></NodeLabel></Node>
                <Node><Csys size={16} /><NodeLabel><Text>PRT_CSYS_DEF</Text></NodeLabel></Node>
                <Node><Curve size={16} /><NodeLabel><Text>曲线来自文件 标识39</Text></NodeLabel></Node>
                <Node><Blend size={16} /><NodeLabel $selected><Text>Boundary Blend 1</Text></NodeLabel></Node>
                <Node><Icon size={16} box={16}><path d="M3 6h5V3l5 5-5 5v-3H3z" fill="#e00000" stroke="#900" /></Icon><NodeLabel>在此插入</NodeLabel></Node>
              </Tree>
            </TreeBox>
          </SideBody>
        </Side>

        <Splitter>
          <Handle aria-label="收起"><Svg width="4" height="6" viewBox="0 0 4 6" aria-hidden><path d="M3.500.500L1 3l2.500 2.500" fill="none" stroke="#123" strokeWidth="1.300" /></Svg></Handle>
          <Handle $low aria-label="展开"><Svg width="4" height="6" viewBox="0 0 4 6" aria-hidden><path d="M.500.500L3 3 .500 5.500" fill="none" stroke="#123" strokeWidth="1.300" /></Svg></Handle>
        </Splitter>

        <ModelView />

        <Features>
          <FeatureColumn>
            <FeatureGrip $first />
            {[Sketch, Plane, Axis, Curve].map((G, i) => <ToolButton key={i}><G /></ToolButton>)}
            <FeatureRow>
              <ToolButton><Points /></ToolButton>
              <DropArrow aria-label="基准点"><SmallTriangle /></DropArrow>
            </FeatureRow>
            {[Csys, Analysis, Chain].map((G, i) => <ToolButton key={i}><G /></ToolButton>)}
            <FeatureGrip />
            {[Note, NoteOff].map((G, i) => <ToolButton key={i}><G /></ToolButton>)}
            <FeatureGrip />
            {[Hole, Shell, Rib, Draft, Round, Chamfer].map((G, i) => <ToolButton key={i}><G /></ToolButton>)}
          </FeatureColumn>
          <FeatureColumn>
            <FeatureGrip $first />
            {[Extrude, Revolve, Sweep, Blend, Style].map((G, i) => <ToolButton key={i}><G /></ToolButton>)}
            <FeatureGrip />
            {[Mirror, Merge, Trim, Pattern].map((G, i) => <ToolButton key={i}><G /></ToolButton>)}
          </FeatureColumn>
        </Features>
      </Main>

      <StatusBar>
        <StatusCell $w={98}><Text>选取了1</Text></StatusCell>
        <FilterCell>
          <Filter aria-label="过滤器"><option>智能</option></Filter>
          <FilterArrow><Chevron /></FilterArrow>
        </FilterCell>
        <StatusCell $w={58}>
          <Icon size={18} box={18}><rect x="5" y="0" width="5" height="5" fill="#c09080" stroke="#876" /><rect x="5" y="5" width="5" height="5" fill="#f4e8b0" stroke="#876" /><circle cx="7.500" cy="13" r="4" fill="#28b848" stroke="#052" /></Icon>
        </StatusCell>
      </StatusBar>

      <TaskBar>
        <Start>
          <Icon size={18} box={18}>
            <g stroke="none"><path d="M2 2c3-1 4-1 7 0L7 8C5 7 3 7 1 8z" fill="#f05a28" /><path d="M10 3c2 1 5 1 8 0l-2 6c-3 1-5 1-7 0z" fill="#8cc63e" /><path d="M1 9c2-1 4-1 6 0l-2 6c-2-1-4-1-6 0z" fill="#4a90f0" /><path d="M8 10c3 1 5 1 8 0l-2 6c-3 1-5 1-8 0z" fill="#fcd030" /></g>
          </Icon>
          开始
        </Start>
        <Quick>
          <QuickButton aria-label="画图"><Icon size={16} box={16}><path d="M5 8h7l-1 7H6z" fill="#cfc4a0" stroke="#776" /><path d="M6 8L3 1M8 8V2M10 8l3-7" stroke="#e8b060" strokeWidth="1.500" /></Icon></QuickButton>
          <QuickButton aria-label="工具"><Icon size={16} box={16}><rect width="16" height="16" fill="#0a0ab8" stroke="none" /><path d="M8 2v12M4 5h8M2 8c0 4 3 6 6 6s6-2 6-6" stroke="#fcd030" strokeWidth="1.600" /></Icon></QuickButton>
          <QuickButton aria-label="桌面"><Icon size={16} box={16}><rect x="2" y="3" width="12" height="11" rx="3" fill="#e8f4ff" stroke="#8ab8e8" /><path d="M5 7h5M5 10h4M8 11l5-8" stroke="#2a68b8" strokeWidth="1.500" /></Icon></QuickButton>
        </Quick>
        <Tasks>
          {TASKS.map(([icon, label], i) => (
            <Task key={i}>{icon}<span><Text>{label}</Text></span></Task>
          ))}
          <Task $active><Cube size={12} /><span><Text>{" PRT0001 ..."}</Text></span></Task>
        </Tasks>
        <Tray>
          <TrayToggle aria-label="显示隐藏的图标"><Svg width="6" height="8" viewBox="0 0 6 8" aria-hidden><path d="M5 1L2 4l3 3" fill="none" stroke="#fff" strokeWidth="2" /></Svg></TrayToggle>
          <Monitors /><Radio /><Monitors /><Shield />
          <Clock><Text>20:00</Text></Clock>
        </Tray>
      </TaskBar>
    </Page>
  );
}
